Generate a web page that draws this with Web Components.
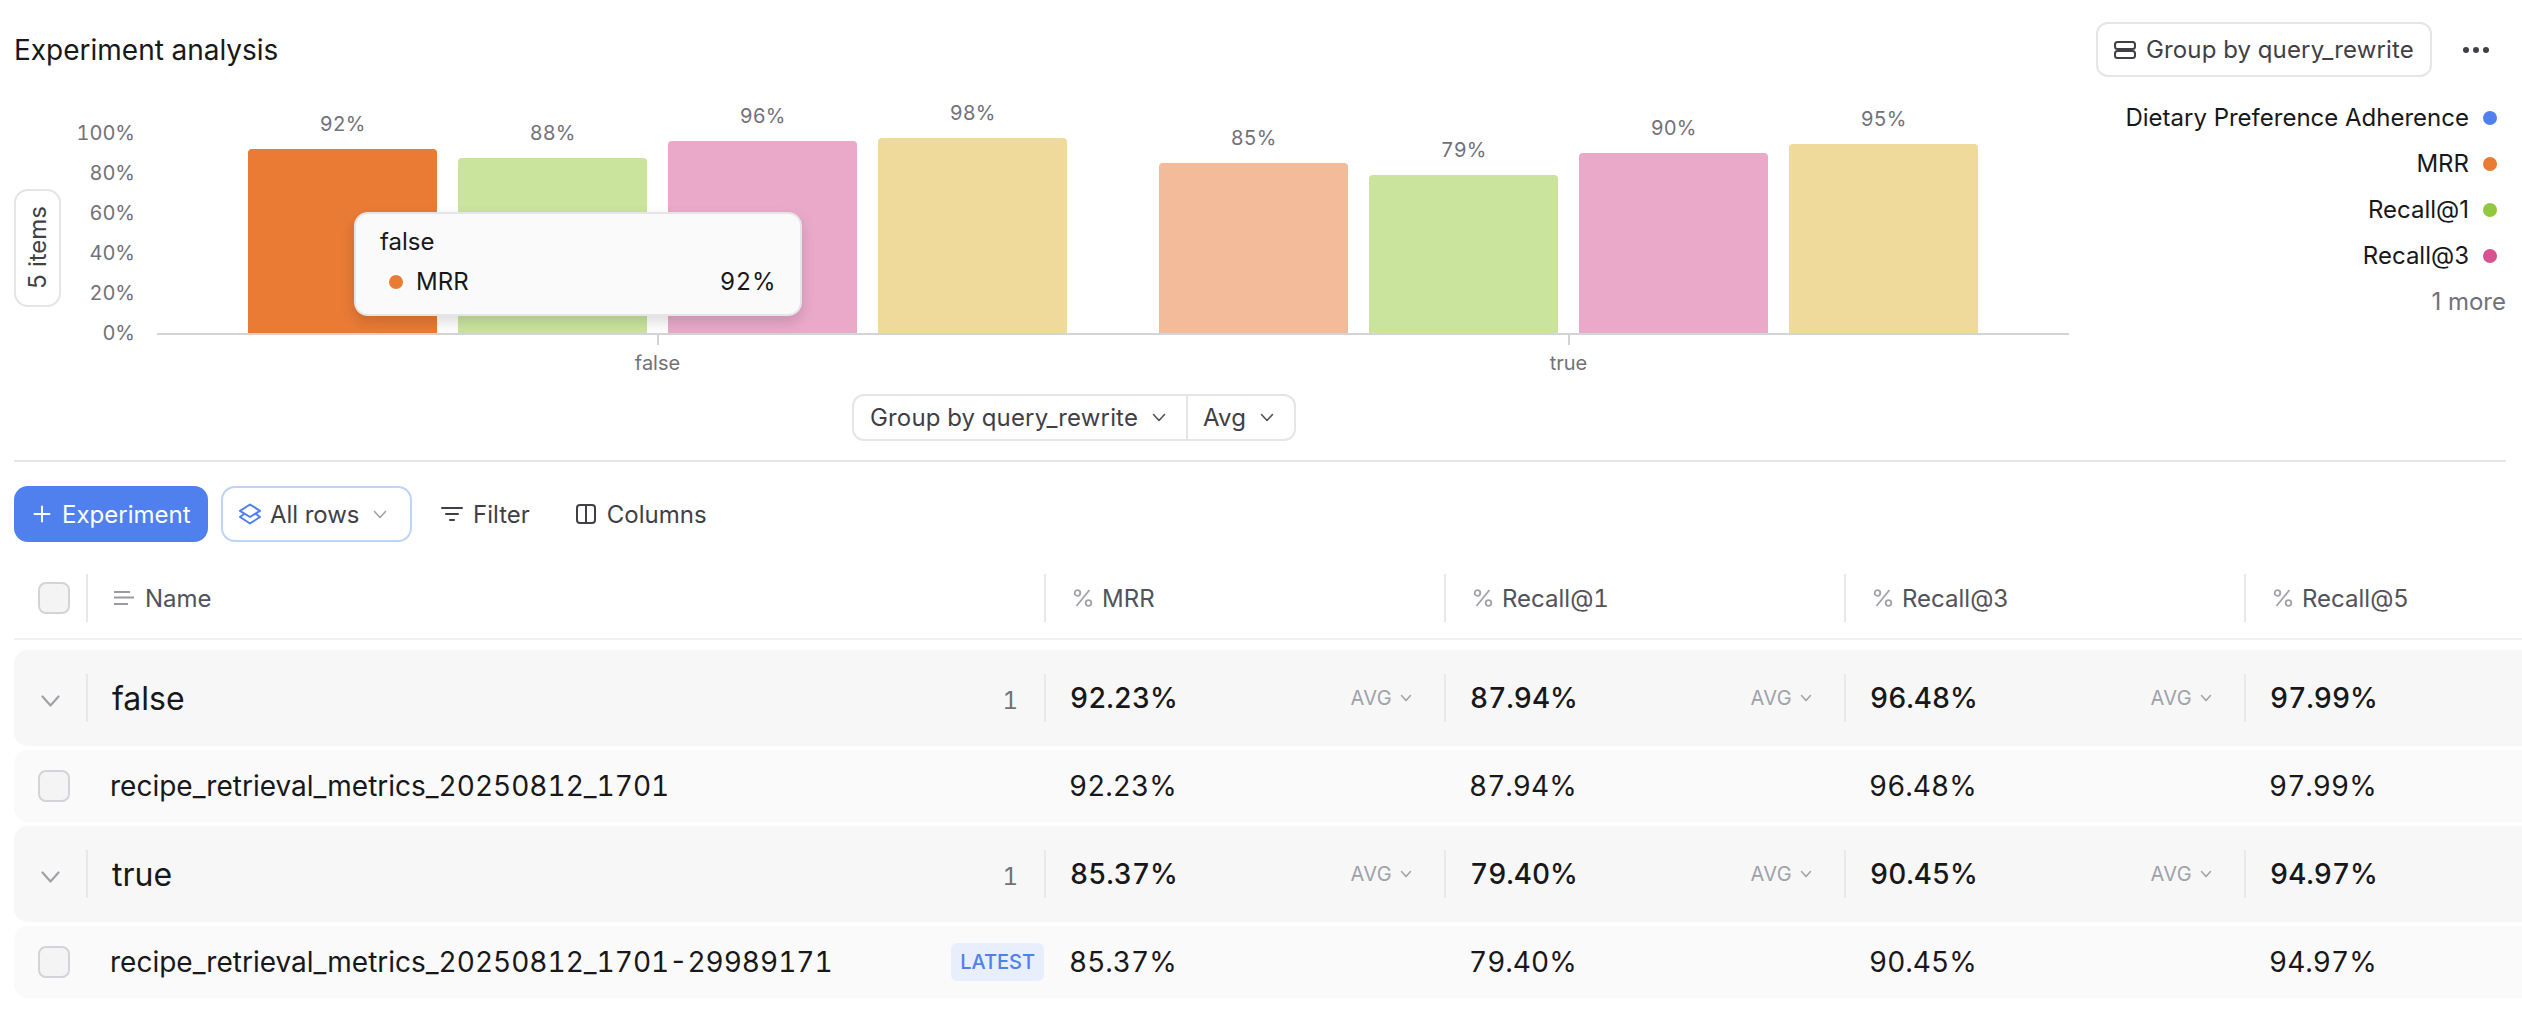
<!doctype html>
<html lang="en">
<head>
<meta charset="utf-8">
<title>Experiment analysis</title>
<style>
  html, body { margin: 0; background: #fff; overflow: hidden; }
  body { font-family: Inter, "Noto Sans", sans-serif; font-variant-numeric: tabular-nums; color: #18181b; width: 2522px; height: 1028px; }
</style>
</head>
<body>
<exp-header>Experiment analysis</exp-header>
<exp-chart></exp-chart>
<exp-toolbar></exp-toolbar>
<exp-table></exp-table>

<script>
// Small stroke icons shared by the components
const chevron = (w, h, color, sw) => `<svg width="${w}" height="${h}" viewBox="0 0 ${w} ${h}" fill="none" stroke="${color}" stroke-width="${sw}" stroke-linecap="round" stroke-linejoin="round"><path d="M1.5 1.5 L${w / 2} ${h - 1.5} L${w - 1.5} 1.5"/></svg>`;

const icons = {
  group: `<svg width="22" height="18" viewBox="0 0 22 18" fill="none" stroke="#3f3f46" stroke-width="2"><rect x="1" y="1" width="20" height="7" rx="2.5"/><rect x="1" y="10" width="20" height="7" rx="2.5"/></svg>`,
  plus: `<svg width="18" height="18" viewBox="0 0 18 18" fill="none" stroke="#fff" stroke-width="2" stroke-linecap="round"><path d="M9 1.5v15M1.5 9h15"/></svg>`,
  layers: `<svg width="24" height="22" viewBox="0 0 24 22" fill="none" stroke="#4f80ee" stroke-width="2" stroke-linejoin="round" stroke-linecap="round"><path d="M12 1.5 L22 7.8 L12 14 L2 7.8Z"/><path d="M6 11 L2 14 L12 20.5 L22 14 L18 11"/></svg>`,
  filter: `<svg width="22" height="16" viewBox="0 0 22 16" fill="none" stroke="#3f3f46" stroke-width="2" stroke-linecap="round"><path d="M1 2h20M5 8h12M9 14h4"/></svg>`,
  columns: `<svg width="22" height="22" viewBox="0 0 22 22" fill="none" stroke="#3f3f46" stroke-width="2"><rect x="2" y="2" width="18" height="18" rx="3"/><path d="M11 2v18"/></svg>`,
  name: `<svg width="20" height="14" viewBox="0 0 20 14" fill="none" stroke="#9a9aa3" stroke-width="2"><path d="M0 1h16M0 6.500h20M0 13h14"/></svg>`,
  percent: `<svg width="20" height="18" viewBox="0 0 20 18" fill="none" stroke="#a1a1aa" stroke-width="1.800"><path d="M16.500 1 L3.500 17"/><circle cx="4.500" cy="4" r="2.800"/><circle cx="15.500" cy="14" r="2.800"/></svg>`
};

class ExpHeader extends HTMLElement {
  constructor() {
    super();
    this.attachShadow({ mode: 'open' }).innerHTML = `
      <style>
        :host { display: flex; align-items: center; justify-content: space-between; height: 55px; margin: 22px 16px 0 14px; }
        .title { font-size: 28px; color: #18181b; }
        .actions { display: flex; align-items: center; }
        .btn { display: flex; align-items: center; gap: 10px; height: 51px; padding: 0 16px 0 16px; border: 2px solid #e5e5e5; border-radius: 12px; font-size: 24px; letter-spacing: .15px; color: #3f3f46; }
        .more { display: flex; gap: 4px; margin: 0 17px 0 31px; }
        .more i { width: 6px; height: 6px; border-radius: 50%; background: #3f3f46; }
      </style>
      <div class="title"><slot></slot></div>
      <div class="actions">
        <div class="btn">${icons.group}<span>Group by query_rewrite</span></div>
        <div class="more"><i></i><i></i><i></i></div>
      </div>`;
  }
}

class ChartBar extends HTMLElement {
  constructor() {
    super();
    const h = this.getAttribute('h');
    this.attachShadow({ mode: 'open' }).innerHTML = `
      <style>
        :host { display: flex; flex-direction: column; justify-content: flex-end; align-items: center; width: 189px; height: 200px; }
        .label { font-size: 20px; line-height: 24px; color: #71717a; margin-bottom: 13px; flex: none; }
        .bar { width: 189px; flex: none; border-radius: 4px 4px 0 0; }
      </style>
      <span class="label">${this.getAttribute('label')}</span>
      <div class="bar" style="height:${h}px;background:${this.getAttribute('color')}"></div>`;
  }
}

class ChartTooltip extends HTMLElement {
  constructor() {
    super();
    this.attachShadow({ mode: 'open' }).innerHTML = `
      <style>
        :host { position: absolute; left: 197px; top: 79px; box-sizing: border-box; width: 448px; height: 104px; padding: 12px 24px 0 24px; background: #fafafa; border: 2px solid #e5e5e5; border-radius: 14px; box-shadow: 0 6px 14px rgba(0,0,0,.14); font-size: 24px; color: #18181b; }
        .head { line-height: 32px; margin-bottom: 8px; }
        .row { display: flex; align-items: center; line-height: 32px; }
        .dot { width: 14px; height: 14px; border-radius: 50%; background: #e97b35; box-shadow: 0 0 0 2px #fff; margin: 0 13px 0 9px; }
        .val { margin-left: auto; letter-spacing: .5px; }
      </style>
      <div class="head">false</div>
      <div class="row"><span class="dot"></span><span>MRR</span><span class="val">92%</span></div>`;
  }
}

class ExpChart extends HTMLElement {
  constructor() {
    super();
    const O = '#e97b35', OL = '#f3bb99', G = '#cae49e', P = '#eaa9c9', Y = '#efd99b';
    const bar = (h, label, color) => `<chart-bar h="${h}" label="${label}" color="${color}"></chart-bar>`;
    const legend = (name, color) => `<div class="item"><span>${name}</span><i style="background:${color}"></i></div>`;
    this.attachShadow({ mode: 'open' }).innerHTML = `
      <style>
        :host { display: block; margin: 0 16px 0 14px; padding-bottom: 19px; border-bottom: 2px solid #e5e5e5; }
        .main { display: flex; align-items: flex-start; }
        .pill { box-sizing: border-box; width: 47px; height: 118px; margin-top: 112px; flex: none; display: flex; align-items: center; justify-content: center; border: 2px solid #e5e5e5; border-radius: 14px; }
        .pill span { writing-mode: vertical-rl; transform: rotate(180deg); font-size: 24px; color: #3f3f46; }
        .yaxis { width: 74px; height: 200px; margin-top: 56px; flex: none; display: flex; flex-direction: column; justify-content: space-between; align-items: flex-end; font-size: 20px; color: #71717a; }
        .yaxis span { height: 0; display: flex; align-items: center; }
        .plot { position: relative; width: 1912px; margin: 56px 0 0 22px; flex: none; }
        .bands { display: flex; height: 200px; padding: 0 45px; border-bottom: 2px solid #d4d4d8; }
        .band { flex: 1; display: flex; justify-content: center; gap: 21px; }
        .xaxis { display: flex; padding: 0 45px; font-size: 20px; line-height: 24px; color: #71717a; }
        .xaxis div { flex: 1; display: flex; flex-direction: column; align-items: center; }
        .xaxis i { width: 2px; height: 10px; background: #d4d4d8; margin-bottom: 6px; }
        .legend { margin: 18px 0 0 auto; display: flex; flex-direction: column; align-items: flex-end; font-size: 24px; font-variant-numeric: normal; line-height: 46px; color: #18181b; }
        .item { display: flex; align-items: center; gap: 14px; padding-right: 9px; }
        .item i { width: 14px; height: 14px; border-radius: 50%; }
        .more { color: #71717a; }
        .seg { display: inline-flex; margin: 19px 0 0 838px; height: 47px; box-sizing: border-box; border: 2px solid #e5e5e5; border-radius: 12px; font-size: 24px; letter-spacing: .15px; color: #3f3f46; }
        .seg div { display: flex; align-items: center; gap: 14px; padding: 0 20px 0 16px; }
        .seg div + div { border-left: 2px solid #e5e5e5; padding-left: 15px; }
      </style>
      <div class="main">
        <div class="pill"><span>5 items</span></div>
        <div class="yaxis"><span>100%</span><span>80%</span><span>60%</span><span>40%</span><span>20%</span><span>0%</span></div>
        <div class="plot">
          <div class="bands">
            <div class="band">${bar(184, '92%', O)}${bar(175, '88%', G)}${bar(192, '96%', P)}${bar(195, '98%', Y)}</div>
            <div class="band">${bar(170, '85%', OL)}${bar(158, '79%', G)}${bar(180, '90%', P)}${bar(189, '95%', Y)}</div>
          </div>
          <div class="xaxis"><div><i></i>false</div><div><i></i>true</div></div>
          <chart-tooltip></chart-tooltip>
        </div>
        <div class="legend">
          ${legend('Dietary Preference Adherence', '#4f80ee')}${legend('MRR', '#e97b35')}${legend('Recall@1', '#92c83e')}${legend('Recall@3', '#d9528f')}
          <div class="more">1 more</div>
        </div>
      </div>
      <div class="seg">
        <div>Group by query_rewrite ${chevron(14, 9, '#52525b', 1.6)}</div>
        <div>Avg ${chevron(14, 9, '#52525b', 1.6)}</div>
      </div>`;
  }
}

class ExpToolbar extends HTMLElement {
  constructor() {
    super();
    this.attachShadow({ mode: 'open' }).innerHTML = `
      <style>
        :host { display: flex; align-items: center; height: 56px; margin: 24px 0 0 14px; font-size: 24px; color: #3f3f46; }
        .btn { display: flex; align-items: center; box-sizing: border-box; height: 56px; }
        .primary { width: 194px; padding-left: 19px; gap: 11px; background: #4f80ee; color: #fff; border-radius: 14px; }
        .rows { width: 191px; margin-left: 13px; padding-left: 15px; gap: 8px; border: 2px solid #bcd4f7; border-radius: 14px; }
        .rows svg:last-child { margin-left: 5px; }
        .ghost { gap: 10px; }
        .filter { margin-left: 29px; }
        .columns { margin-left: 45px; }
      </style>
      <div class="btn primary">${icons.plus}<span>Experiment</span></div>
      <div class="btn rows">${icons.layers}<span>All rows</span>${chevron(14, 9, '#a1a1aa', 1.6)}</div>
      <div class="btn ghost filter">${icons.filter}<span>Filter</span></div>
      <div class="btn ghost columns">${icons.columns}<span>Columns</span></div>`;
  }
}

// One table line. kind = header | group | child
class ExpRow extends HTMLElement {
  constructor() {
    super();
    const kind = this.getAttribute('kind');
    const values = (this.getAttribute('values') || '').split(',');
    const count = this.getAttribute('count');
    const badge = this.getAttribute('badge');
    const checkbox = `<span class="check"></span>`;
    const lead = kind === 'group' ? `<span class="chev">${chevron(19, 12, '#a1a1aa', 2.2)}</span>` : checkbox;
    const nameIcon = kind === 'header' ? icons.name : '';
    const cells = values.map((v, i) => {
      if (kind === 'header') return `<div class="cell">${icons.percent}<span>${v}</span></div>`;
      // the last column runs past the window, its AVG menu is off screen
      if (kind === 'group' && i < values.length - 1) return `<div class="cell"><span>${v}</span><span class="avg">AVG ${chevron(12, 8, '#a1a1aa', 1.5)}</span></div>`;
      return `<div class="cell"><span>${v}</span></div>`;
    }).join('');
    this.attachShadow({ mode: 'open' }).innerHTML = `
      <style>
        :host { display: grid; grid-template-columns: 72px 958px repeat(4, 400px); align-items: center; overflow: hidden; }
        :host([kind=header]) { height: 48px; padding-bottom: 16px; border-bottom: 2px solid #f0f0f0; margin-bottom: 10px; font-size: 24px; color: #52525b; }
        :host([kind=group]) { height: 96px; background: #f7f7f7; border-radius: 14px 0 0 14px; margin-bottom: 4px; font-size: 28px; font-weight: 450; }
        :host([kind=child]) { height: 72px; background: #fafafa; border-radius: 14px 0 0 14px; margin-bottom: 4px; font-size: 28px; }
        .lead { display: flex; align-items: center; height: 48px; padding-left: 24px; box-sizing: border-box; }
        .check { box-sizing: border-box; width: 32px; height: 32px; background: #f4f4f5; border: 2px solid #d4d4d8; border-radius: 8px; }
        .chev { display: flex; padding: 6px 0 0 3px; }
        .name { display: flex; align-items: center; height: 48px; box-sizing: border-box; padding: 0 0 0 24px; }
        :host([kind=header]) .name { border-left: 2px solid #e8e8e8; padding-left: 26px; gap: 11px; }
        :host([kind=group]) .name { border-left: 2px solid #e8e8e8; font-size: 32px; font-weight: 400; }
        .count { margin-left: auto; padding-right: 26px; font-size: 24px; font-weight: 400; color: #71717a; position: relative; top: 2px; }
        .badge { margin-left: auto; padding: 0 9px; height: 38px; line-height: 38px; background: #e8eefb; color: #4f80ee; border-radius: 6px; font-size: 20px; font-weight: 500; letter-spacing: 0; }
        .cell { display: flex; align-items: center; height: 48px; box-sizing: border-box; padding: 0 32px 0 25px; justify-content: space-between; }
        :host([kind=header]) .cell { border-left: 2px solid #e8e8e8; justify-content: flex-start; gap: 9px; padding-left: 27px; }
        :host([kind=group]) .cell { border-left: 2px solid #e8e8e8; padding-left: 24px; }
        .avg { display: flex; align-items: center; gap: 8px; font-size: 20px; font-weight: 400; letter-spacing: .3px; color: #a1a1aa; }
      </style>
      <div class="lead">${lead}</div>
      <div class="name">${nameIcon}<span><slot></slot></span>${count ? `<span class="count">${count}</span>` : ''}${badge ? `<span class="badge">${badge}</span>` : ''}</div>
      ${cells}`;
  }
}

class ExpTable extends HTMLElement {
  constructor() {
    super();
    this.attachShadow({ mode: 'open' }).innerHTML = `
      <style>
        :host { display: block; margin: 32px 0 0 14px; overflow: hidden; }
      </style>
      <exp-row kind="header" values="MRR,Recall@1,Recall@3,Recall@5">Name</exp-row>
      <exp-row kind="group" count="1" values="92.23%,87.94%,96.48%,97.99%">false</exp-row>
      <exp-row kind="child" values="92.23%,87.94%,96.48%,97.99%">recipe_retrieval_metrics_20250812_1701</exp-row>
      <exp-row kind="group" count="1" values="85.37%,79.40%,90.45%,94.97%">true</exp-row>
      <exp-row kind="child" badge="LATEST" values="85.37%,79.40%,90.45%,94.97%">recipe_retrieval_metrics_20250812_1701-29989171</exp-row>`;
  }
}

customElements.define('exp-header', ExpHeader);
customElements.define('chart-bar', ChartBar);
customElements.define('chart-tooltip', ChartTooltip);
customElements.define('exp-chart', ExpChart);
customElements.define('exp-toolbar', ExpToolbar);
customElements.define('exp-row', ExpRow);
customElements.define('exp-table', ExpTable);
</script>
</body>
</html>
